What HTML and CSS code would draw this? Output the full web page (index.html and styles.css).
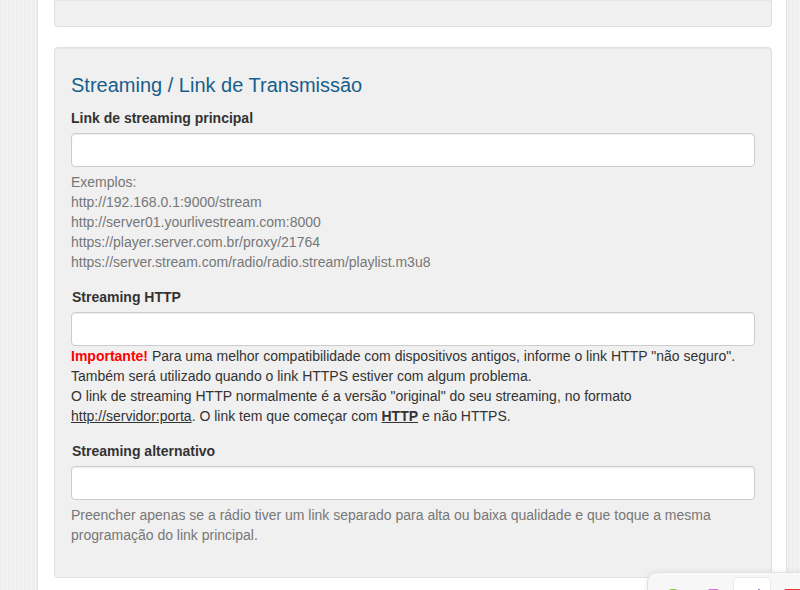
FILE: index.html
```html
<!DOCTYPE html>
<html lang="pt-BR">
<head>
<meta charset="utf-8">
<title>Streaming / Link de Transmissão</title>
<link rel="stylesheet" href="styles.css">
</head>
<body>
<div class="page">
  <main class="content">
    <section class="well well-top"></section>

    <section class="well">
      <h3 class="well-title">Streaming / Link de Transmissão</h3>

      <div class="form-group">
        <label class="field-label" for="stream-main">Link de streaming principal</label>
        <input class="field" type="text" id="stream-main">
        <p class="help-block">
          Exemplos:<br>
          http://192.168.0.1:9000/stream<br>
          http://server01.yourlivestream.com:8000<br>
          https://player.server.com.br/proxy/21764<br>
          https://server.stream.com/radio/radio.stream/playlist.m3u8
        </p>
      </div>

      <div class="form-group">
        <label class="field-label indent" for="stream-http">Streaming HTTP</label>
        <input class="field" type="text" id="stream-http">
        <p class="note">
          <strong class="warn">Importante!</strong> Para uma melhor compatibilidade com dispositivos antigos, informe o link HTTP "não seguro".<br>
          Também será utilizado quando o link HTTPS estiver com algum problema.<br>
          O link de streaming HTTP normalmente é a versão "original" do seu streaming, no formato<br>
          <u>http://servidor:porta</u>. O link tem que começar com <u><strong>HTTP</strong></u> e não HTTPS.
        </p>
      </div>

      <div class="form-group last">
        <label class="field-label indent" for="stream-alt">Streaming alternativo</label>
        <input class="field" type="text" id="stream-alt">
        <p class="help-block">
          Preencher apenas se a rádio tiver um link separado para alta ou baixa qualidade e que toque a mesma programação do link principal.
        </p>
      </div>
    </section>
  </main>
</div>

<!-- floating quick-access dock, bottom right -->
<div class="dock">
  <span class="dock-icon green"></span>
  <span class="dock-icon magenta"></span>
  <span class="dock-tab"><span class="dock-icon purple"></span></span>
  <span class="dock-icon red"></span>
</div>
</body>
</html>
```
FILE: styles.css
```css
html, body {
  margin: 0;
  height: 100%;
}

body {
  font-family: "Liberation Sans", Arial, sans-serif;
  font-size: 14px;
  line-height: 20px;
  color: #333;
  overflow: hidden;
  background: repeating-linear-gradient(90deg, #eeeeee 0 2px, #f2f2f2 2px 4px);
}

.page {
  height: 100%;
  padding-left: 37px;
  padding-right: 13px;
}

.content {
  height: 100%;
  background: #fff;
  border-left: 1px solid #e2e2e2;
  border-right: 1px solid #e2e2e2;
  padding: 0 14px 0 16px;
}

.well {
  background: #f0f0f0;
  border: 1px solid #e0e0e0;
  border-radius: 4px;
  box-shadow: inset 0 1px 1px rgba(0, 0, 0, .05);
  padding: 26px 16px 17px;
}

.well-top {
  height: 26px;
  padding: 0;
  border-top: 0;
  border-radius: 0 0 4px 4px;
  margin-bottom: 20px;
}

.well-title {
  margin: 0 0 12px;
  font-size: 20px;
  line-height: 22px;
  font-weight: normal;
  color: #175f8c;
}

.form-group {
  margin-bottom: 15px;
}

.field-label {
  display: block;
  font-weight: bold;
  margin-bottom: 5px;
}

.field-label.indent {
  padding-left: 1px;
}

.field {
  display: block;
  box-sizing: border-box;
  width: 100%;
  height: 34px;
  margin: 0;
  padding: 6px 12px;
  background: #fff;
  border: 1px solid #ccc;
  border-radius: 4px;
  box-shadow: inset 0 1px 1px rgba(0, 0, 0, .075);
  font: inherit;
}

.help-block {
  margin: 5px 0 10px;
  color: #777;
}

.note {
  margin: 0;
}

.warn {
  color: #f00;
}

.dock {
  position: fixed;
  left: 647px;
  top: 572px;
  width: 200px;
  height: 60px;
  box-sizing: border-box;
  background: #f7f7f7;
  border: 1px solid #e2e2e2;
  border-radius: 10px;
  box-shadow: 0 0 6px rgba(0, 0, 0, .08);
  display: flex;
  align-items: flex-start;
}

.dock-icon {
  display: block;
  width: 8px;
  height: 12px;
  border-radius: 2px;
  margin-top: 16px;
}

.dock-icon.green   { background: #8bc34a; margin-left: 21px; }
.dock-icon.magenta { background: #d86be0; width: 11px; margin-left: 31px; }
.dock-icon.purple  { background: #7a5fc0; width: 2px; margin: 11px 0 0 24px; }
.dock-icon.red     { background: #e53935; width: 18px; margin-left: 13px; }

.dock-tab {
  display: block;
  width: 38px;
  height: 40px;
  margin: 4px 0 0 14px;
  background: #fff;
  border: 1px solid #ececec;
  border-radius: 5px;
  box-sizing: border-box;
}
```
